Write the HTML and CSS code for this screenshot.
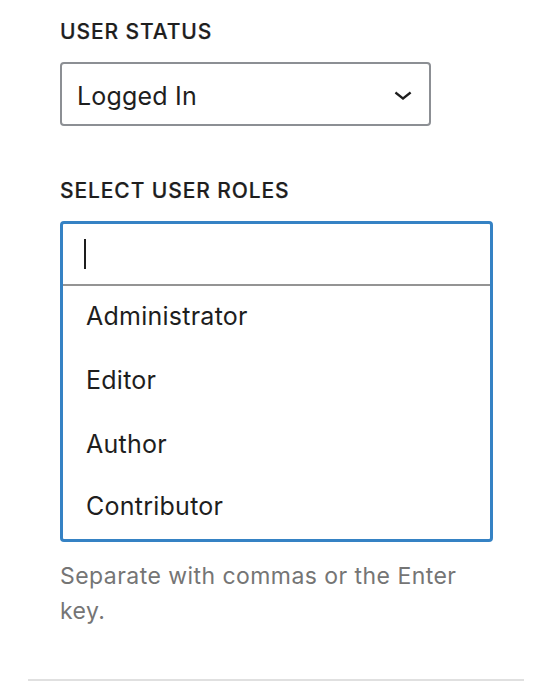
FILE: index.html
```html
<!DOCTYPE html>
<html lang="en">

<head>
    <meta charset="UTF-8">
    <meta name="viewport" content="width=device-width, initial-scale=1.0">
    <title>Block Visibility</title>
    <link rel="stylesheet" href="styles.css">
</head>

<body>

    <div class="panel">
        <div class="field">
            <label class="field-label">User Status</label>
            <div class="select-control">
                <span class="select-value">Logged In</span>
                <svg class="select-arrow" viewBox="0 0 24 24" width="36" height="36">
                    <path d="M17.5 11.6L12 16l-5.5-4.4.9-1.2L12 14l4.6-3.6 1 1.2z"></path>
                </svg>
            </div>
        </div>

        <div class="field">
            <label class="field-label">Select User Roles</label>
            <div class="token-field">
                <div class="token-input">
                    <span class="caret"></span>
                </div>
                <ul class="suggestions">
                    <li>Administrator</li>
                    <li>Editor</li>
                    <li>Author</li>
                    <li>Contributor</li>
                </ul>
            </div>
            <p class="help">Separate with commas or the Enter key.</p>
        </div>
    </div>

    <div class="divider"></div>

</body>

</html>
```

FILE: styles.css
```css
* {
    box-sizing: border-box;
    margin: 0;
    padding: 0;
    font-family: Inter, "Noto Sans", sans-serif;
}

body {
    background-color: #ffffff;
    color: #1e1e1e;
    width: 542px;
    height: 688px;
    overflow: hidden;
}

.panel {
    padding: 20px 0 0 60px;
}

.field-label {
    display: block;
    font-size: 21px;
    font-weight: 500;
    text-transform: uppercase;
    letter-spacing: 0.9px;
    line-height: 24px;
    margin-bottom: 18px;
    -webkit-text-stroke: 0.2px #1e1e1e;
}

/* Select */
.select-control {
    width: 371px;
    height: 64px;
    border: 2px solid #8c8f94;
    border-radius: 4px;
    display: flex;
    align-items: center;
    justify-content: space-between;
    padding: 0 8px 0 15px;
    margin-bottom: 53px;
}

.select-value {
    font-size: 25px;
    letter-spacing: 0.2px;
    padding-top: 3px;
}

.select-arrow {
    fill: #1e1e1e;
}

/* Token field with suggestions */
.token-field {
    width: 433px;
    border: 3px solid #3582c4;
    border-radius: 4px;
}

.token-input {
    height: 62px;
    border-bottom: 2px solid #949494;
    display: flex;
    align-items: center;
    padding-left: 21px;
}

.caret {
    display: block;
    width: 2px;
    height: 30px;
    background-color: #1e1e1e;
}

.suggestions {
    list-style: none;
}

.suggestions li {
    height: 64px;
    display: flex;
    align-items: center;
    padding: 0 0 5px 23px;
    font-size: 25px;
    letter-spacing: 0.25px;
}

.suggestions li:last-child {
    height: 61px;
}

.help {
    width: 420px;
    margin-top: 17px;
    font-size: 23px;
    line-height: 35px;
    letter-spacing: 0.45px;
    color: #757575;
}

.divider {
    margin: 50px 18px 0 28px;
    height: 2px;
    background-color: #e0e0e0;
}
```
